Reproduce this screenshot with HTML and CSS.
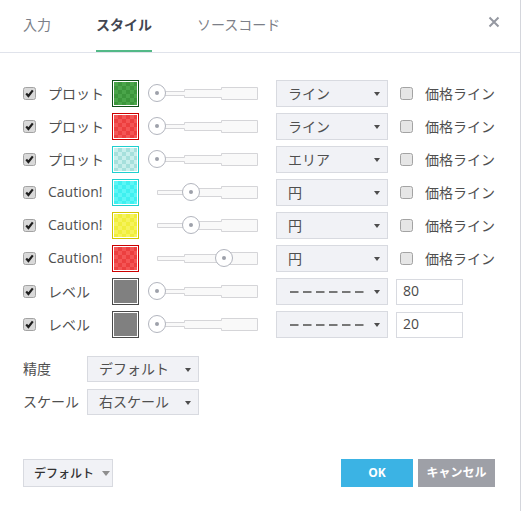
FILE: index.html
```html
<!DOCTYPE html>
<html lang="ja">
<head>
<meta charset="utf-8">
<link rel="stylesheet" href="styles.css">
</head>
<body>
<div class="dialog">
  <div class="header">
    <div class="tabs">
      <div class="tab">入力</div>
      <div class="tab active">スタイル</div>
      <div class="tab">ソースコード</div>
    </div>
    <div class="close">
      <svg width="12" height="12" viewBox="0 0 12 12"><path d="M1.5 1.5L10.5 10.5M10.5 1.5L1.5 10.5" stroke="#9598a1" stroke-width="2" fill="none"/></svg>
    </div>
  </div>
  <div class="content">
    <div class="rows">
      <div class="row">
        <span class="cb"><svg viewBox="0 0 13 13"><rect x=".5" y=".5" width="12" height="12" rx="2" class="cb-box"/><path d="M3.2 6.6L5.4 9L9.8 3.4" class="cb-mark"/></svg></span>
        <span class="label">プロット</span>
        <span class="swatch sw-green"><span class="fill"></span></span>
        <div class="slider"><svg class="track" width="101" height="13" viewBox="0 0 101 13"><path d="M0.5 4.5H27.5V2.5H64.5V0.5H100.5V12.5H64.5V10.5H27.5V8.5H0.5Z"/></svg><span class="handle" style="left:0px"></span></div>
        <div class="select"><span class="val">ライン</span><span class="caret"></span></div>
        <span class="cb"><svg viewBox="0 0 13 13"><rect x=".5" y=".5" width="12" height="12" rx="2" class="cb-box off"/></svg></span>
        <span class="label2">価格ライン</span>
      </div>
      <div class="row">
        <span class="cb"><svg viewBox="0 0 13 13"><rect x=".5" y=".5" width="12" height="12" rx="2" class="cb-box"/><path d="M3.2 6.6L5.4 9L9.8 3.4" class="cb-mark"/></svg></span>
        <span class="label">プロット</span>
        <span class="swatch sw-red"><span class="fill"></span></span>
        <div class="slider"><svg class="track" width="101" height="13" viewBox="0 0 101 13"><path d="M0.5 4.5H27.5V2.5H64.5V0.5H100.5V12.5H64.5V10.5H27.5V8.5H0.5Z"/></svg><span class="handle" style="left:0px"></span></div>
        <div class="select"><span class="val">ライン</span><span class="caret"></span></div>
        <span class="cb"><svg viewBox="0 0 13 13"><rect x=".5" y=".5" width="12" height="12" rx="2" class="cb-box off"/></svg></span>
        <span class="label2">価格ライン</span>
      </div>
      <div class="row">
        <span class="cb"><svg viewBox="0 0 13 13"><rect x=".5" y=".5" width="12" height="12" rx="2" class="cb-box"/><path d="M3.2 6.6L5.4 9L9.8 3.4" class="cb-mark"/></svg></span>
        <span class="label">プロット</span>
        <span class="swatch sw-aqua"><span class="fill"></span></span>
        <div class="slider"><svg class="track" width="101" height="13" viewBox="0 0 101 13"><path d="M0.5 4.5H27.5V2.5H64.5V0.5H100.5V12.5H64.5V10.5H27.5V8.5H0.5Z"/></svg><span class="handle" style="left:0px"></span></div>
        <div class="select"><span class="val">エリア</span><span class="caret"></span></div>
        <span class="cb"><svg viewBox="0 0 13 13"><rect x=".5" y=".5" width="12" height="12" rx="2" class="cb-box off"/></svg></span>
        <span class="label2">価格ライン</span>
      </div>
      <div class="row">
        <span class="cb"><svg viewBox="0 0 13 13"><rect x=".5" y=".5" width="12" height="12" rx="2" class="cb-box"/><path d="M3.2 6.6L5.4 9L9.8 3.4" class="cb-mark"/></svg></span>
        <span class="label">Caution!</span>
        <span class="swatch sw-cyan"><span class="fill"></span></span>
        <div class="slider"><svg class="track" width="101" height="13" viewBox="0 0 101 13"><path d="M0.5 4.5H27.5V2.5H64.5V0.5H100.5V12.5H64.5V10.5H27.5V8.5H0.5Z"/></svg><span class="handle" style="left:34px"></span></div>
        <div class="select"><span class="val">円</span><span class="caret"></span></div>
        <span class="cb"><svg viewBox="0 0 13 13"><rect x=".5" y=".5" width="12" height="12" rx="2" class="cb-box off"/></svg></span>
        <span class="label2">価格ライン</span>
      </div>
      <div class="row">
        <span class="cb"><svg viewBox="0 0 13 13"><rect x=".5" y=".5" width="12" height="12" rx="2" class="cb-box"/><path d="M3.2 6.6L5.4 9L9.8 3.4" class="cb-mark"/></svg></span>
        <span class="label">Caution!</span>
        <span class="swatch sw-yellow"><span class="fill"></span></span>
        <div class="slider"><svg class="track" width="101" height="13" viewBox="0 0 101 13"><path d="M0.5 4.5H27.5V2.5H64.5V0.5H100.5V12.5H64.5V10.5H27.5V8.5H0.5Z"/></svg><span class="handle" style="left:34px"></span></div>
        <div class="select"><span class="val">円</span><span class="caret"></span></div>
        <span class="cb"><svg viewBox="0 0 13 13"><rect x=".5" y=".5" width="12" height="12" rx="2" class="cb-box off"/></svg></span>
        <span class="label2">価格ライン</span>
      </div>
      <div class="row">
        <span class="cb"><svg viewBox="0 0 13 13"><rect x=".5" y=".5" width="12" height="12" rx="2" class="cb-box"/><path d="M3.2 6.6L5.4 9L9.8 3.4" class="cb-mark"/></svg></span>
        <span class="label">Caution!</span>
        <span class="swatch sw-red"><span class="fill"></span></span>
        <div class="slider"><svg class="track" width="101" height="13" viewBox="0 0 101 13"><path d="M0.5 4.5H27.5V2.5H64.5V0.5H100.5V12.5H64.5V10.5H27.5V8.5H0.5Z"/></svg><span class="handle" style="left:67px"></span></div>
        <div class="select"><span class="val">円</span><span class="caret"></span></div>
        <span class="cb"><svg viewBox="0 0 13 13"><rect x=".5" y=".5" width="12" height="12" rx="2" class="cb-box off"/></svg></span>
        <span class="label2">価格ライン</span>
      </div>
      <div class="row row-level">
        <span class="cb"><svg viewBox="0 0 13 13"><rect x=".5" y=".5" width="12" height="12" rx="2" class="cb-box"/><path d="M3.2 6.6L5.4 9L9.8 3.4" class="cb-mark"/></svg></span>
        <span class="label">レベル</span>
        <span class="swatch sw-gray"><span class="fill"></span></span>
        <div class="slider"><svg class="track" width="101" height="13" viewBox="0 0 101 13"><path d="M0.5 4.5H27.5V2.5H64.5V0.5H100.5V12.5H64.5V10.5H27.5V8.5H0.5Z"/></svg><span class="handle" style="left:0px"></span></div>
        <div class="select"><svg class="dashes" width="74" height="2" viewBox="0 0 74 2"><line x1="0" y1="1" x2="74" y2="1"/></svg><span class="caret"></span></div>
        <div class="num"><span class="val">80</span></div>
      </div>
      <div class="row row-level">
        <span class="cb"><svg viewBox="0 0 13 13"><rect x=".5" y=".5" width="12" height="12" rx="2" class="cb-box"/><path d="M3.2 6.6L5.4 9L9.8 3.4" class="cb-mark"/></svg></span>
        <span class="label">レベル</span>
        <span class="swatch sw-gray"><span class="fill"></span></span>
        <div class="slider"><svg class="track" width="101" height="13" viewBox="0 0 101 13"><path d="M0.5 4.5H27.5V2.5H64.5V0.5H100.5V12.5H64.5V10.5H27.5V8.5H0.5Z"/></svg><span class="handle" style="left:0px"></span></div>
        <div class="select"><svg class="dashes" width="74" height="2" viewBox="0 0 74 2"><line x1="0" y1="1" x2="74" y2="1"/></svg><span class="caret"></span></div>
        <div class="num"><span class="val">20</span></div>
      </div>
    </div>

    <div class="settings">
      <div class="set-row">
        <span class="set-label">精度</span>
        <div class="select small"><span class="val">デフォルト</span><span class="caret"></span></div>
      </div>
      <div class="set-row">
        <span class="set-label">スケール</span>
        <div class="select small"><span class="val">右スケール</span><span class="caret"></span></div>
      </div>
    </div>

    <div class="footer">
      <div class="btn-default"><span>デフォルト</span><span class="caret-gray"></span></div>
      <div class="actions">
        <div class="btn ok">OK</div>
        <div class="btn cancel">キャンセル</div>
      </div>
    </div>
  </div>
</div>
</body>
</html>
```

FILE: styles.css
```css
* { box-sizing: border-box; }

body {
  margin: 0;
  background: #fff;
  font-family: "Open Sans", "Noto Sans CJK JP", sans-serif;
  color: #4a4a4a;
}

.dialog {
  width: 521px;
  height: 511px;
  border-right: 1px solid #d4d6dc;
  background: #fff;
}

/* header */
.header {
  height: 53px;
  border-bottom: 1px solid #e0e3eb;
  display: flex;
  justify-content: space-between;
  padding: 0 20px 0 23px;
}

.tabs {
  display: flex;
  gap: 45px;
}

.tab {
  position: relative;
  height: 52px;
  display: flex;
  align-items: center;
  padding-bottom: 4px;
  font-size: 14px;
  color: #7c7f88;
}

.tab.active {
  font-weight: bold;
  color: #434651;
}

.tab.active::after {
  content: "";
  position: absolute;
  left: 0;
  right: 0;
  bottom: 0;
  height: 2px;
  background: #53b987;
}

.close {
  height: 52px;
  display: flex;
  align-items: center;
  padding-bottom: 8px;
}

.close svg { display: block; }

/* content */
.content {
  padding: 27px 25px 0 23px;
}

.rows {
  display: flex;
  flex-direction: column;
  gap: 6px;
}

.row {
  display: flex;
  align-items: center;
  height: 27px;
}

.cb {
  width: 13px;
  height: 13px;
  margin-right: 12px;
  flex: none;
}

.cb svg { display: block; width: 13px; height: 13px; }

.cb-box {
  fill: #d9d9d9;
  stroke: #a3a3a3;
}

.cb-box.off {
  fill: #e6e6e6;
}

.cb-mark {
  fill: none;
  stroke: #1f1f1f;
  stroke-width: 2.2;
}

.label,
.label2,
.set-label,
.val {
  padding-bottom: 2px;
  white-space: nowrap;
}

.label {
  width: 64px;
  font-size: 14px;
  color: #4f4f4f;
}

.label2 {
  font-size: 14px;
  color: #4f4f4f;
}

/* swatches */
.swatch {
  width: 27px;
  height: 27px;
  padding: 1px;
  border: 1px solid var(--b);
  background: #fff;
  margin-right: 9px;
  flex: none;
}

.swatch .fill {
  display: block;
  width: 100%;
  height: 100%;
  background: repeating-conic-gradient(var(--c1) 0 25%, var(--c2) 0 50%) 0 0 / 8px 8px;
}

.sw-green  { --b: #10501a; --c1: #3c963c; --c2: #4aa54a; }
.sw-red    { --b: #cc0000; --c1: #ec3f3f; --c2: #f45555; }
.sw-aqua   { --b: #1fcfcf; --c1: #a6e0dc; --c2: #c8efec; }
.sw-cyan   { --b: #1fcfcf; --c1: #3ff0f0; --c2: #5cf6f6; }
.sw-yellow { --b: #d2c600; --c1: #f0ee3c; --c2: #f6f35c; }
.sw-gray   { --b: #4a4a4a; --c1: #808080; --c2: #808080; }

/* slider */
.slider {
  position: relative;
  width: 110px;
  height: 27px;
  display: flex;
  align-items: center;
  padding-left: 9px;
  margin-right: 18px;
  flex: none;
}

.track { display: block; }

.track path {
  fill: #f9f9f9;
  stroke: #d5d5d8;
}

.handle {
  position: absolute;
  top: 4px;
  width: 18px;
  height: 18px;
  border-radius: 50%;
  border: 1px solid #b2b5be;
  background: #fff;
}

.handle::after {
  content: "";
  position: absolute;
  left: 6px;
  top: 6px;
  width: 4px;
  height: 4px;
  border-radius: 50%;
  background: #9ea1aa;
}

/* selects */
.select {
  width: 112px;
  height: 27px;
  display: flex;
  align-items: center;
  justify-content: space-between;
  padding: 0 7px 0 11px;
  background: #f1f2f6;
  border: 1px solid #d8dae0;
  font-size: 14px;
  color: #4f4f4f;
  margin-right: 12px;
  flex: none;
}

.caret {
  width: 0;
  height: 0;
  border-left: 3.5px solid transparent;
  border-right: 3.5px solid transparent;
  border-top: 4px solid #4d4d4d;
  margin-top: 1px;
}

.dashes line {
  stroke: #777;
  stroke-width: 2;
  stroke-dasharray: 8.5 4.5;
}

.dashes { display: block; margin-left: 2px; }

.row-level .select { margin-right: 8px; }

.num {
  width: 67px;
  height: 26px;
  border: 1px solid #d8dae0;
  background: #fff;
  display: flex;
  align-items: center;
  padding-left: 6px;
  font-size: 14px;
  color: #4a4a4a;
}

/* settings */
.settings {
  margin-top: 18px;
  display: flex;
  flex-direction: column;
  gap: 7px;
}

.set-row {
  display: flex;
  align-items: center;
  height: 26px;
}

.set-label {
  width: 64px;
  font-size: 14px;
  color: #4f4f4f;
}

.select.small {
  height: 26px;
}

/* footer */
.footer {
  margin-top: 44px;
  display: flex;
  justify-content: space-between;
  align-items: center;
}

.btn-default {
  width: 90px;
  height: 28px;
  display: flex;
  align-items: center;
  padding-left: 10px;
  gap: 8px;
  background: #f1f2f6;
  border: 1px solid #d8dae0;
  font-size: 12px;
  font-weight: 500;
  color: #333;
}

.caret-gray {
  width: 0;
  height: 0;
  border-left: 4px solid transparent;
  border-right: 4px solid transparent;
  border-top: 5px solid #8e8e8e;
}

.actions {
  display: flex;
  gap: 5px;
}

.btn {
  height: 28px;
  display: flex;
  align-items: center;
  justify-content: center;
  color: #fff;
  font-size: 12px;
  font-weight: bold;
  padding-bottom: 2px;
}

.btn.ok {
  width: 72px;
  background: #3bb3e4;
}

.btn.cancel {
  width: 77px;
  background: #9ea0a7;
}
```
